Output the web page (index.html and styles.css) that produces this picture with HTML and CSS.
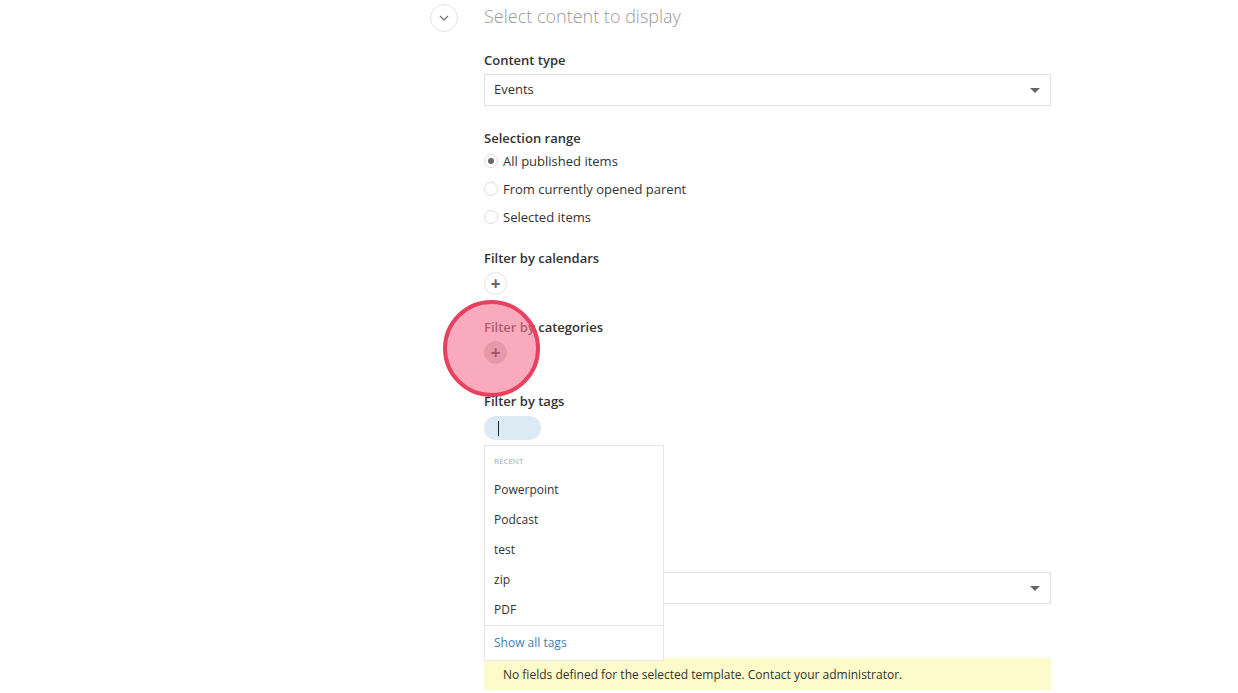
FILE: index.html
```html
<html lang="en">
<head>
  <meta charset="UTF-8">
  <link rel="stylesheet" href="styles.css">
</head>
<body>
<div class="panel">
  <div class="panel-header">
    <div class="toggle">
      <svg width="10" height="6" viewBox="0 0 10 6"><path d="M1 1l4 4 4-4" fill="none" stroke="#777" stroke-width="1.3"/></svg>
    </div>
    <div class="panel-title">Select content to display</div>
  </div>

  <div class="panel-body">
    <div class="field field-first">
      <div class="field-label">Content type</div>
      <div class="select">
        <span>Events</span>
        <span class="caret"></span>
      </div>
    </div>

    <div class="field field-range">
      <div class="field-label">Selection range</div>
      <div class="radio"><span class="radio-dot checked"></span>All published items</div>
      <div class="radio"><span class="radio-dot"></span>From currently opened parent</div>
      <div class="radio"><span class="radio-dot"></span>Selected items</div>
    </div>

    <div class="field field-calendars">
      <div class="field-label">Filter by calendars</div>
      <div class="add-btn">+</div>
    </div>

    <div class="field field-categories">
      <div class="field-label">Filter by categories</div>
      <div class="add-btn add-btn-hover">+</div>
      <div class="click-mark"></div>
    </div>

    <div class="field field-tags">
      <div class="field-label">Filter by tags</div>
      <div class="tag-input"><span class="cursor"></span></div>
      <div class="tag-menu">
        <div class="tag-menu-head">RECENT</div>
        <div class="tag-item">Powerpoint</div>
        <div class="tag-item">Podcast</div>
        <div class="tag-item">test</div>
        <div class="tag-item">zip</div>
        <div class="tag-item">PDF</div>
        <div class="tag-menu-foot">Show all tags</div>
      </div>
    </div>

    <div class="field field-template">
      <div class="select">
        <span></span>
        <span class="caret"></span>
      </div>
    </div>

    <div class="notice">No fields defined for the selected template. Contact your administrator.</div>
  </div>
</div>
</body>
</html>
```

FILE: styles.css
```css
body {
  margin: 0;
  font-family: "Open Sans", "Liberation Sans", sans-serif;
  font-size: 13px;
  color: #333;
  background: #fff;
}

.panel {
  padding: 4px 0 0 430px;
}

.panel-header {
  display: flex;
  align-items: center;
  gap: 26px;
  height: 28px;
}

.toggle {
  width: 26px;
  height: 26px;
  border: 1px solid #e3e3e3;
  border-radius: 50%;
  display: flex;
  align-items: center;
  justify-content: center;
}

.panel-title {
  font-size: 18px;
  font-weight: 300;
  color: #999;
  margin-top: -4px;
}

.panel-body {
  margin-left: 54px;
  width: 567px;
}

.field-label {
  font-weight: 600;
  color: #333;
  line-height: 18px;
}

.field-first {
  margin-top: 19px;
}

.field-first .field-label {
  margin-bottom: 5px;
}

.select {
  height: 30px;
  border: 1px solid #e0e0e0;
  display: flex;
  align-items: center;
  justify-content: space-between;
  padding: 0 10px 0 9px;
}

.select span:first-child {
  margin-top: -3px;
}

.caret {
  width: 0;
  height: 0;
  border-left: 5px solid transparent;
  border-right: 5px solid transparent;
  border-top: 5px solid #666;
  margin-top: 1px;
}

.field-range {
  margin-top: 23px;
}

.radio {
  display: flex;
  align-items: center;
  height: 28px;
  gap: 5px;
  color: #333;
}

.radio-dot {
  width: 12px;
  height: 12px;
  border: 1px solid #ddd;
  border-radius: 50%;
  display: flex;
  align-items: center;
  justify-content: center;
}

.radio-dot.checked::after {
  content: "";
  width: 6px;
  height: 6px;
  border-radius: 50%;
  background: #666;
}

.field-calendars {
  margin-top: 18px;
}

.add-btn {
  width: 21px;
  height: 21px;
  border: 1px solid #e2e2e2;
  border-radius: 50%;
  margin-top: 5px;
  display: flex;
  align-items: center;
  justify-content: center;
  font-size: 17px;
  font-weight: 700;
  line-height: 1;
  color: #666;
}

.add-btn-hover {
  background: #cfcfcf;
  border-color: #cfcfcf;
  color: #222;
}

.field-categories {
  margin-top: 23px;
  position: relative;
}

.click-mark {
  position: absolute;
  left: -41px;
  top: -18px;
  width: 89px;
  height: 89px;
  border: 4px solid #e8405f;
  border-radius: 50%;
  background: rgba(245, 120, 148, 0.62);
}

.field-tags {
  margin-top: 28px;
  position: relative;
}

.tag-input {
  width: 57px;
  height: 24px;
  margin-top: 6px;
  border-radius: 12px;
  background: #dbeaf3;
  display: flex;
  align-items: center;
}

.cursor {
  width: 1px;
  height: 15px;
  background: #222;
  margin-left: 14px;
}

.tag-menu {
  position: absolute;
  left: 0;
  top: 53px;
  width: 178px;
  border: 1px solid #e6e6e6;
  background: #fff;
  z-index: 2;
}

.tag-menu-head {
  font-size: 8px;
  color: #aaa;
  padding: 9px 9px 9px;
}

.tag-item {
  height: 30px;
  line-height: 30px;
  padding: 0 9px;
  color: #333;
  font-size: 12px;
}

.tag-menu-foot {
  border-top: 1px solid #e6e6e6;
  height: 34px;
  line-height: 34px;
  padding: 0 9px;
  color: #3d7fb5;
  font-size: 12px;
}

.field-template {
  margin-top: 132px;
}

.notice {
  margin-top: 54px;
  height: 30px;
  line-height: 30px;
  padding: 2px 0 0 19px;
  background: #fcfbc9;
  font-size: 12px;
  color: #333;
}
```
